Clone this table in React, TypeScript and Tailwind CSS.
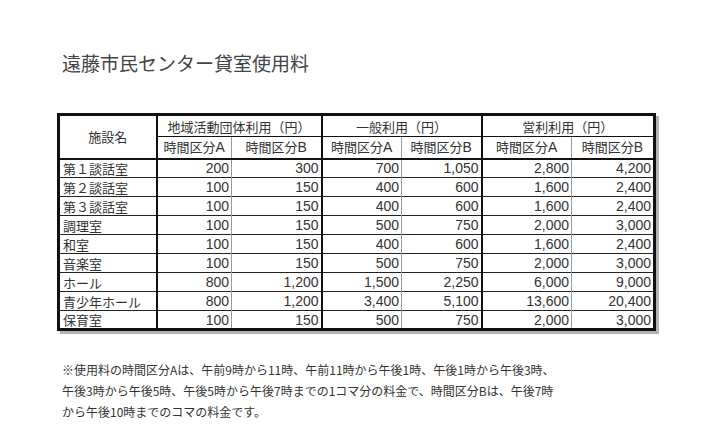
import React from "react";

const rows: [string, string, string, string, string, string, string][] = [
  ["第１談話室", "200", "300", "700", "1,050", "2,800", "4,200"],
  ["第２談話室", "100", "150", "400", "600", "1,600", "2,400"],
  ["第３談話室", "100", "150", "400", "600", "1,600", "2,400"],
  ["調理室", "100", "150", "500", "750", "2,000", "3,000"],
  ["和室", "100", "150", "400", "600", "1,600", "2,400"],
  ["音楽室", "100", "150", "500", "750", "2,000", "3,000"],
  ["ホール", "800", "1,200", "1,500", "2,250", "6,000", "9,000"],
  ["青少年ホール", "800", "1,200", "3,400", "5,100", "13,600", "20,400"],
  ["保育室", "100", "150", "500", "750", "2,000", "3,000"],
];

export default function App() {
  const font = { fontFamily: '"Noto Sans CJK JP", "Noto Sans", sans-serif' };
  const numFont = { fontFamily: '"Liberation Sans", "Noto Sans CJK JP", sans-serif' };
  const thick = "border-l-[2px] border-l-[#111]";
  const thin = "border-l border-l-[#9a9a9a]";
  const numCell = "pr-[2px] text-right text-[14px] border-t border-t-[#222]";
  return (
    <div className="w-[709px] h-[443px] bg-white text-[#333]" style={font}>
      <div className="pl-[62px] pt-[49px] text-[19px] leading-[28px] text-[#444]">
        遠藤市民センター貸室使用料
      </div>
      <div className="pl-[57px] mt-[36px]">
        <div className="inline-block shadow-[3px_3px_0_0_#b4b4b4]">
          <table className="table-fixed border-collapse border-[3px] border-[#111] text-[13px] text-[#333] leading-none">
            <colgroup>
              <col className="w-[98px]" />
              <col className="w-[75px]" />
              <col className="w-[90px]" />
              <col className="w-[80px]" />
              <col className="w-[80px]" />
              <col className="w-[90px]" />
              <col className="w-[83px]" />
            </colgroup>
            <thead>
              <tr className="h-[22px]">
                <th rowSpan={2} className="font-normal text-center align-middle border-b-[2px] border-b-[#111]">
                  施設名
                </th>
                <th colSpan={2} className={`font-normal text-center border-b border-b-[#111] ${thick}`}>
                  地域活動団体利用（円）
                </th>
                <th colSpan={2} className={`font-normal text-center border-b border-b-[#111] ${thick}`}>
                  一般利用（円）
                </th>
                <th colSpan={2} className={`font-normal text-center border-b border-b-[#111] ${thick}`}>
                  営利利用（円）
                </th>
              </tr>
              <tr className="h-[22px]">
                {[0, 1, 2].map((g) => (
                  <React.Fragment key={g}>
                    <th className={`font-normal text-center border-b-[2px] border-b-[#111] ${thick}`}>
                      時間区分<span className="text-[14px]" style={numFont}>A</span>
                    </th>
                    <th className={`font-normal text-center border-b-[2px] border-b-[#111] ${thin}`}>
                      時間区分<span className="text-[14px]" style={numFont}>B</span>
                    </th>
                  </React.Fragment>
                ))}
              </tr>
            </thead>
            <tbody>
              {rows.map((r) => (
                <tr key={r[0]} className="h-[19px]">
                  <td className="pl-[3px] text-left border-t border-t-[#222]">{r[0]}</td>
                  <td className={`${numCell} ${thick}`} style={numFont}>{r[1]}</td>
                  <td className={`${numCell} ${thin}`} style={numFont}>{r[2]}</td>
                  <td className={`${numCell} ${thick}`} style={numFont}>{r[3]}</td>
                  <td className={`${numCell} ${thin}`} style={numFont}>{r[4]}</td>
                  <td className={`${numCell} ${thick}`} style={numFont}>{r[5]}</td>
                  <td className={`${numCell} ${thin}`} style={numFont}>{r[6]}</td>
                </tr>
              ))}
            </tbody>
          </table>
        </div>
      </div>
      <div className="pl-[62px] mt-[23px] text-[12px] leading-[21px] text-[#333]">
        <div>※使用料の時間区分Aは、午前9時から11時、午前11時から午後1時、午後1時から午後3時、</div>
        <div>午後3時から午後5時、午後5時から午後7時までの1コマ分の料金で、時間区分Bは、午後7時</div>
        <div>から午後10時までのコマの料金です。</div>
      </div>
    </div>
  );
}
